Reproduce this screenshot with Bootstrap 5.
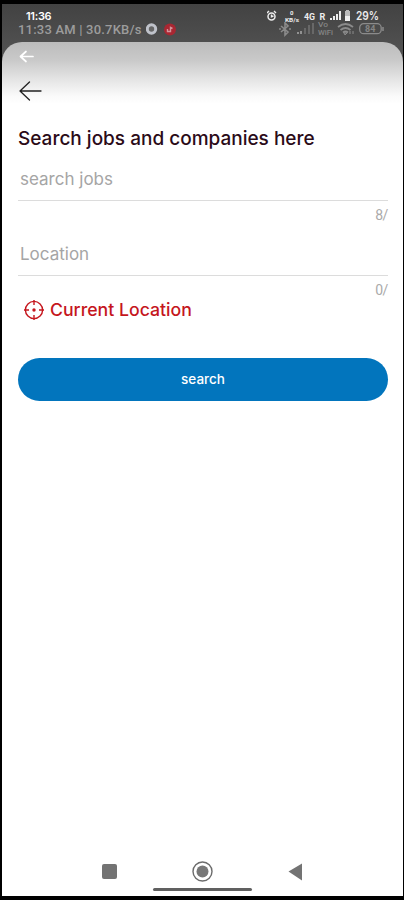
<!DOCTYPE html>
<html lang="en">
<head>
<meta charset="utf-8">
<meta name="viewport" content="width=device-width, initial-scale=1">
<title>Search jobs</title>
<link href="https://cdn.jsdelivr.net/npm/bootstrap@5.3.0/dist/css/bootstrap.min.css" rel="stylesheet">
<style>
body{background:#000;font-family:Inter,"Open Sans",sans-serif;overflow:hidden}
svg{display:block;flex:none}
.phone{height:900px;padding:4px 1px 4px 2px;background:#000}
.screen{background:linear-gradient(#424242,#505050 42px,#505050 90px,#fff 91px)}
.status{height:38px;padding:6px 19px 0 16px}
.status-now{height:12px;font:600 11px/12px Inter,sans-serif;color:#fff}
.status-old{height:15px;font:500 13px/15px Roboto,sans-serif;color:#9c9c9c}
.clock{margin-left:8px;letter-spacing:-.3px}
.old-time{letter-spacing:.2px;white-space:pre}
.sheet{border-radius:20px 20px 0 0;background:linear-gradient(#bcbcbc,#c9c9c9 18px,#e4e4e4 37px,#fafafa 54px,#fff 62px)}
.content{padding:7px 15px 0 16px}
.title{font-size:19px;line-height:24px;font-weight:500;color:#2b0b18;margin-top:26px;white-space:nowrap}
.field{border:0;border-bottom:1px solid #dcdcdc;border-radius:0;background:transparent;height:36px;padding:0 2px 8px;font-size:17px;line-height:24px;box-shadow:none}
.field::placeholder{color:#a5a5a5;opacity:1}
.entry{margin-top:14px}
.entry + .entry{margin-top:17px}
.count{height:22px;padding-top:5px;font:400 14px/18px Roboto,sans-serif;letter-spacing:-.4px;color:#aaa}
.here{color:#c5161d;font-size:17.7px;font-weight:500;line-height:24px;padding-left:6px;gap:6px}
.go{height:43px;background:#0275bd;color:#fff;font-size:13.5px;font-weight:500;line-height:1;border:0;margin-top:36px}
.go:hover{background:#0268a8;color:#fff}
.keys{height:37px;padding-right:1px}
</style>
<script src="https://cdn.jsdelivr.net/npm/bootstrap@5.3.0/dist/js/bootstrap.bundle.min.js"></script>
</head>
<body>
<div class="phone">
<main class="screen h-100 d-flex flex-column">
  <header class="status">
    <div class="status-now d-flex justify-content-between">
      <span class="clock">11:36</span>
      <svg width="117" height="13" viewBox="0 0 117 13" fill="none" stroke="#ededed">
        <circle cx="4.500" cy="6.500" r="3.500" stroke-width="1.500"/><path d="M0 3l2-2M7 1l2 2M4.500 4.500v2.200l2-.7" stroke-width="1.400"/>
        <g fill="#ededed" stroke="none" font-family="Roboto,sans-serif" font-weight="700">
          <text x="23" y="5" font-size="6">0</text><text x="18" y="11.500" font-size="6" textLength="14" lengthAdjust="spacingAndGlyphs">KB/s</text>
          <text x="37" y="9.500" font-size="9" textLength="11" lengthAdjust="spacingAndGlyphs">4G</text><text x="52.500" y="9.500" font-size="9">R</text>
          <path d="M63 8h2v2h-2zM66 6h2v4h-2zM69 4h2v6h-2zM72 1h2v9h-2z"/>
          <path d="M79 0h3v1h1v10h-5V1h1z" fill="#bbb"/><path d="M78 6h5v5h-5z"/>
          <text x="89" y="10" font-size="12" font-weight="600" font-family="Inter,sans-serif" textLength="23" lengthAdjust="spacingAndGlyphs">29%</text>
        </g>
      </svg>
    </div>
    <div class="status-old d-flex justify-content-between">
      <div class="d-flex align-items-center">
        <span class="old-time">11:33 AM | 30.7KB/s</span>
        <svg class="ms-1" width="32" height="14" viewBox="0 0 32 14"><circle cx="5.500" cy="6" r="4.200" fill="#666" stroke="#bfc2ca" stroke-width="3"/><circle cx="24" cy="6.500" r="6" fill="#a82732"/><path d="M21.500 6v2.500h3V4.500l2 1" fill="none" stroke="#d4949b" stroke-width="1.400"/></svg>
      </div>
      <svg width="107" height="15" viewBox="0 0 107 15" fill="none" stroke="#8b8b8b">
        <path d="M4 4l7 6-3 3V1l3 3-7 6M2 7h2M12 7h2" stroke-width="1.600"/>
        <path d="M20 10h2v2h-2zM23 9h2v3h-2z" fill="#929292" stroke="none"/><path d="M27 6h2v6h-2zM31 3h2v9h-2zM35 1h2v11h-2z" fill="#686868" stroke="none"/>
        <g fill="#858585" stroke="none" font-family="Roboto,sans-serif" font-weight="500"><text x="41" y="5" font-size="6.500" textLength="10" lengthAdjust="spacingAndGlyphs">Vo</text><text x="41" y="13" font-size="6.500" textLength="15" lengthAdjust="spacingAndGlyphs">WiFi</text></g>
        <path d="M61 5q7.500-6 15 0M63.500 8q5-4 10 0M66 10.500q2.500-2 5 0" stroke-width="1.700"/><path d="M68 13l-1-2h3zM73 9v3M76 9v3"/>
        <rect x="82.700" y="1.700" width="21.500" height="10" rx="4" stroke-width="1.300"/><path d="M106 5v4" stroke-width="1.500"/>
        <text x="88" y="10" fill="#858585" stroke="none" font-family="Roboto,sans-serif" font-weight="700" font-size="9">84</text>
      </svg>
    </div>
  </header>
  <section class="sheet flex-grow-1 d-flex flex-column">
    <div class="content">
      <svg width="26" height="52" viewBox="0 0 26 52" fill="none" stroke-linecap="round" stroke-linejoin="round">
        <path d="M15 7.500H3M8 2.500L2.500 7.500 8 12.500" stroke="#fff" stroke-width="1.700"/>
        <path d="M23 42H2M11.500 33L2 42l9.500 9" stroke="#222" stroke-width="1.300"/>
      </svg>
      <h1 class="title mb-0">Search jobs and companies here</h1>
      <form onsubmit="return false">
        <div class="entry"><input class="form-control field" id="jobs" placeholder="search jobs" aria-label="search jobs"><div class="count text-end">8/</div></div>
        <div class="entry"><input class="form-control field" id="place" placeholder="Location" aria-label="Location"><div class="count text-end">0/</div></div>
        <div class="here d-flex align-items-center">
          <svg width="20" height="20" viewBox="0 0 20 20" fill="none" stroke="currentColor" stroke-width="1.400"><circle cx="10" cy="10" r="8.600"/><path d="M10 0v5M10 15v5M0 10h5M15 10h5"/><circle cx="10" cy="10" r="1.700" fill="currentColor" stroke="none"/></svg>
          <span>Current Location</span>
        </div>
        <button class="btn go w-100 rounded-pill" type="submit">search</button>
      </form>
    </div>
    <nav class="keys mt-auto d-flex justify-content-center">
      <svg width="202" height="37" viewBox="0 0 202 37" aria-label="Navigation keys">
        <rect x="1" y="5" width="15" height="15" rx="2" fill="#737373"/>
        <circle cx="101.500" cy="12.500" r="9.500" fill="none" stroke="#6b6b6b" stroke-width="1.400"/><circle cx="101.500" cy="12.500" r="6" fill="#777"/>
        <path d="M187.500 12.500L201 4.500v17z" fill="#737373"/>
        <rect x="52" y="29" width="99" height="3" rx="1.500" fill="#606060"/>
      </svg>
    </nav>
  </section>
</main>
</div>
</body>
</html>
